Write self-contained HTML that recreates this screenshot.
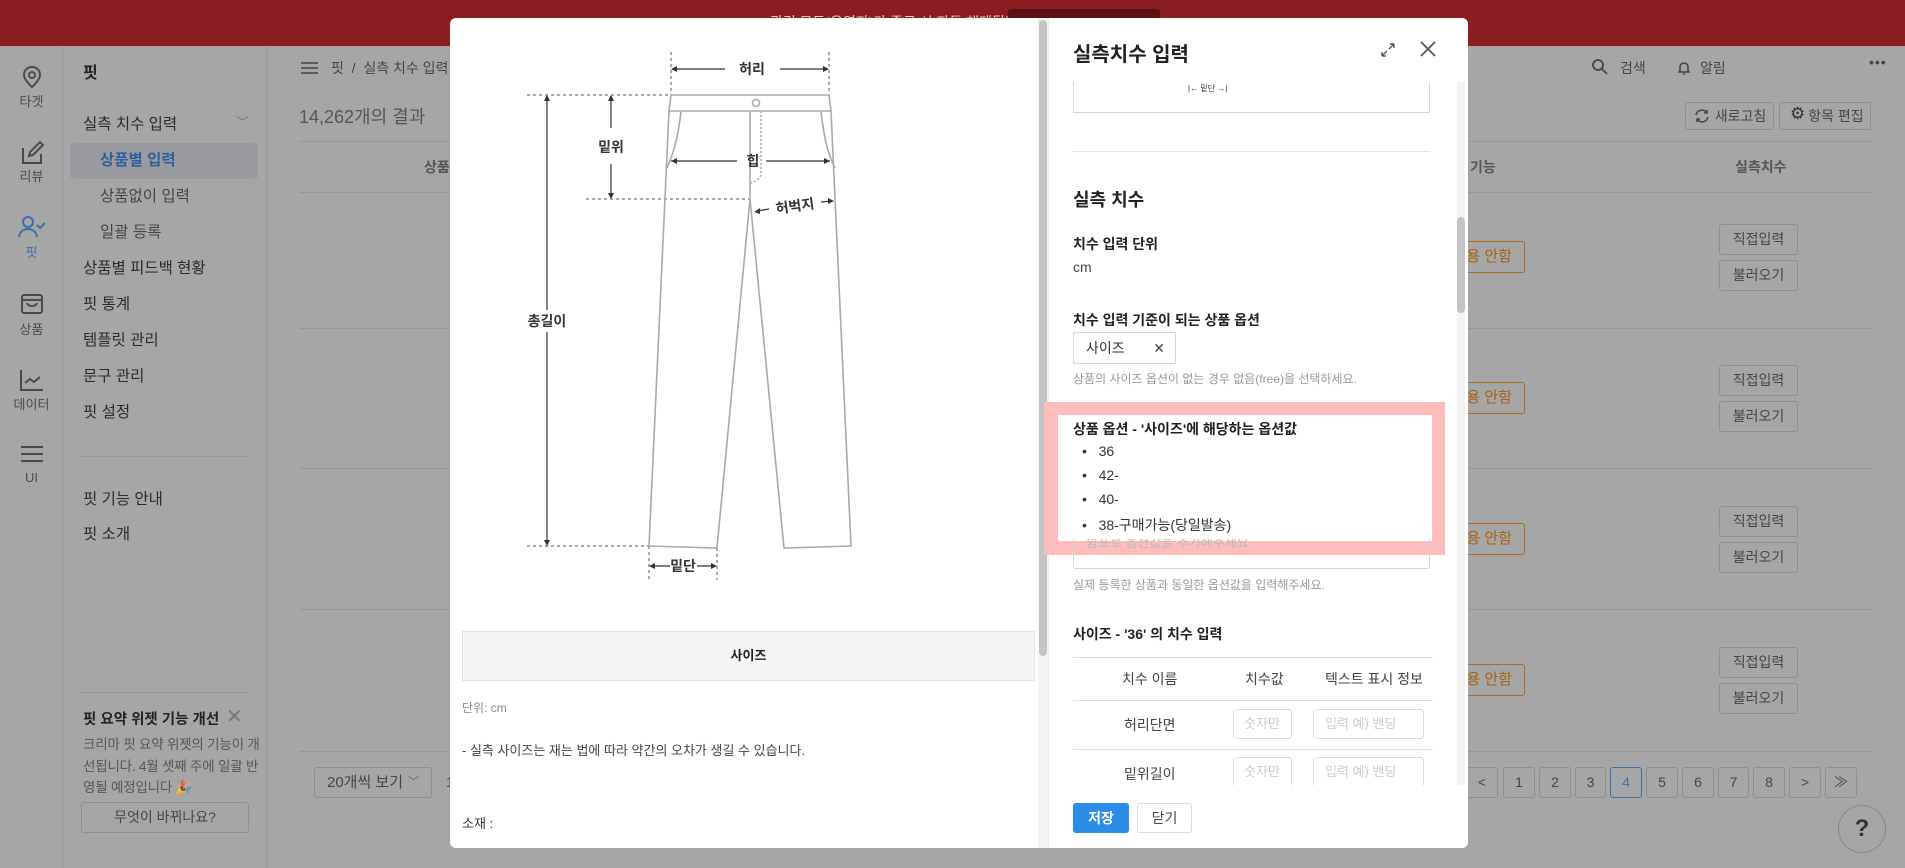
<!DOCTYPE html>
<html><head><meta charset="utf-8">
<style>
*{box-sizing:border-box;margin:0;padding:0}
body{width:1905px;height:868px;overflow:hidden;background:#a6a6a6;font-family:"Liberation Sans","Noto Sans CJK KR",sans-serif;color:#333;position:relative}
.a{position:absolute;white-space:nowrap}
.top{position:absolute;left:0;top:0;width:1905px;height:46px;background:#8b1c1f}
.rail{position:absolute;left:0;top:46px;width:63px;height:822px;border-right:1px solid #9a9a9a}
.side{position:absolute;left:63px;top:46px;width:204px;height:822px;border-right:1px solid #9a9a9a}
.rl{font-size:13px;color:#4a4a4a;width:63px;text-align:center;left:0}
.si{font-size:15.5px;color:#2a2a2a;left:83px}
.mbtn{position:absolute;border:1px solid #8e8e8e;border-radius:3px;font-size:14px;color:#444;text-align:center;background:#a6a6a6}
.ob{position:absolute;border:1px solid #b0681a;border-radius:3px;color:#a85f10;font-size:15px;left:1420px;width:105px;height:32px;line-height:30px;text-align:right;padding-right:12px}
.pg{position:absolute;top:767px;height:31px;border:1px solid #8e8e8e;border-radius:3px;font-size:14px;color:#444;text-align:center;line-height:29px}
.hl{position:absolute;height:1px;background:#969696}
.modal{position:absolute;left:450px;top:18px;width:1018px;height:830px;background:#fff;border-radius:6px;overflow:hidden}
.r{font-size:14px}
.inp{position:absolute;border:1px solid #d9d9d9;border-radius:3px;background:#fff}
</style></head><body>
<div class="top"></div>
<div class="a" style="left:770px;top:12px;font-size:14px;color:#e8c8c8">관리 모드(운영자)가 종료 시 자동 해제됩니다</div>
<div class="a" style="left:1008px;top:9px;width:152px;height:22px;background:#5a1214;border-radius:3px"></div>

<div class="rail">
<svg class="a" style="left:19px;top:18px" width="26" height="26" viewBox="0 0 26 26" fill="none" stroke="#4a4a4a" stroke-width="2"><path d="M13 3c-5 0-8 3.5-8 8 0 5 8 12 8 12s8-7 8-12c0-4.5-3-8-8-8z"/><circle cx="13" cy="11" r="3"/></svg>
<div class="a rl" style="top:45px">타겟</div>
<svg class="a" style="left:19px;top:94px" width="26" height="26" viewBox="0 0 26 26" fill="none" stroke="#4a4a4a" stroke-width="2"><path d="M4 8v15h18V14"/><path d="M10 16l1-4 10-10 3 3-10 10z"/></svg>
<div class="a rl" style="top:120px">리뷰</div>
<svg class="a" style="left:18px;top:169px" width="28" height="24" viewBox="0 0 28 24" fill="none" stroke="#3a6fb0" stroke-width="2"><circle cx="10" cy="7" r="5"/><path d="M1 22c1-6 5-8 9-8s8 2 9 8"/><path d="M19 10l3 3 5-5"/></svg>
<div class="a rl" style="top:196px;color:#3a6fb0">핏</div>
<svg class="a" style="left:19px;top:245px" width="26" height="26" viewBox="0 0 26 26" fill="none" stroke="#4a4a4a" stroke-width="2"><rect x="3" y="4" width="20" height="18" rx="2"/><path d="M3 9h20M8 12c1 4 9 4 10 0"/></svg>
<div class="a rl" style="top:273px">상품</div>
<svg class="a" style="left:19px;top:322px" width="26" height="24" viewBox="0 0 26 24" fill="none" stroke="#4a4a4a" stroke-width="2"><path d="M2 2v20h22"/><path d="M6 15l5-4 4 3 6-5"/></svg>
<div class="a rl" style="top:348px">데이터</div>
<svg class="a" style="left:19px;top:398px" width="26" height="20" viewBox="0 0 26 20" fill="none" stroke="#4a4a4a" stroke-width="2"><path d="M2 3h22M2 10h22M2 17h22"/></svg>
<div class="a rl" style="top:424px">UI</div>
</div>

<div class="side"></div>
<div class="a" style="left:83px;top:59px;font-size:16px;font-weight:bold;color:#222">핏</div>
<div class="a si" style="top:112px">실측 치수 입력</div>
<div class="a" style="left:236px;top:112px;font-size:13px;color:#777">﹀</div>
<div class="a" style="left:70px;top:143px;width:188px;height:36px;background:#999ba0;border-radius:3px"></div>
<div class="a si" style="left:100px;top:148px;color:#2f5f9e;font-weight:bold">상품별 입력</div>
<div class="a si" style="left:100px;top:184px;color:#444">상품없이 입력</div>
<div class="a si" style="left:100px;top:220px;color:#444">일괄 등록</div>
<div class="a si" style="top:256px">상품별 피드백 현황</div>
<div class="a si" style="top:292px">핏 통계</div>
<div class="a si" style="top:328px">템플릿 관리</div>
<div class="a si" style="top:364px">문구 관리</div>
<div class="a si" style="top:400px">핏 설정</div>
<div class="hl" style="left:80px;top:456px;width:168px"></div>
<div class="a si" style="top:487px">핏 기능 안내</div>
<div class="a si" style="top:522px">핏 소개</div>
<div class="hl" style="left:80px;top:692px;width:168px"></div>
<div class="a" style="left:83px;top:708px;font-size:14.5px;font-weight:bold;color:#222">핏 요약 위젯 기능 개선</div>
<div class="a" style="left:226px;top:704px;font-size:20px;color:#777">✕</div>
<div class="a" style="left:83px;top:734px;font-size:13.5px;color:#555;line-height:21.5px;white-space:normal;width:178px;word-break:break-all;letter-spacing:-0.2px">크리마 핏 요약 위젯의 기능이 개선됩니다. 4월 셋째 주에 일괄 반영될 예정입니다 🎉</div>
<div class="mbtn" style="left:81px;top:802px;width:168px;height:31px;line-height:29px">무엇이 바뀌나요?</div>

<svg class="a" style="left:300px;top:60px" width="20" height="16"><path d="M1 3h17M1 8h17M1 13h17" stroke="#444" stroke-width="1.6"/></svg>
<div class="a" style="left:331px;top:58px;font-size:14px;color:#444">핏 &nbsp;/ &nbsp;실측 치수 입력 &nbsp;/</div>
<div class="a" style="left:299px;top:103px;font-size:18px;color:#555">14,262개의 결과</div>
<div class="hl" style="left:299px;top:141px;width:1573px"></div>
<div class="hl" style="left:299px;top:192px;width:1573px"></div>
<div class="a" style="left:424px;top:157px;font-size:14px;color:#555;font-weight:bold">상품</div>
<div class="a" style="left:1470px;top:157px;font-size:14px;color:#555;font-weight:bold">기능</div>
<div class="a" style="left:1735px;top:157px;font-size:14px;color:#555;font-weight:bold">실측치수</div>
<div class="hl" style="left:299px;top:328px;width:1573px"></div>
<div class="hl" style="left:299px;top:468px;width:1573px"></div>
<div class="hl" style="left:299px;top:609px;width:1573px"></div>
<div class="hl" style="left:299px;top:751px;width:1573px"></div>

<svg class="a" style="left:1591px;top:58px" width="18" height="18" fill="none" stroke="#444" stroke-width="1.8"><circle cx="7" cy="7" r="5"/><path d="M11 11l5 5"/></svg>
<div class="a" style="left:1620px;top:58px;font-size:14px;color:#444">검색</div>
<svg class="a" style="left:1675px;top:58px" width="18" height="18" fill="none" stroke="#444" stroke-width="1.6"><path d="M3 14h12M5 14V9a4 4 0 018 0v5M8 16h2"/></svg>
<div class="a" style="left:1700px;top:58px;font-size:14px;color:#444">알림</div>
<div class="a" style="left:1869px;top:54px;font-size:14px;color:#444;letter-spacing:1px">•••</div>
<div class="mbtn" style="left:1685px;top:102px;width:89px;height:28px;line-height:26px;padding-left:22px">새로고침</div>
<svg class="a" style="left:1694px;top:108px" width="16" height="16" fill="none" stroke="#444" stroke-width="1.6"><path d="M2 7a6 6 0 0111-2M14 9a6 6 0 01-11 2M13 2v3h-3M3 14v-3h3"/></svg>
<div class="mbtn" style="left:1779px;top:102px;width:92px;height:28px;line-height:26px;padding-left:22px">항목 편집</div>
<div class="a" style="left:1790px;top:104px;font-size:17px;color:#333">⚙</div>

<div class="ob" style="top:241px">사용 안함</div>
<div class="ob" style="top:382px">사용 안함</div>
<div class="ob" style="top:523px">사용 안함</div>
<div class="ob" style="top:664px">사용 안함</div>
<div class="mbtn" style="left:1719px;top:224px;width:79px;height:31px;line-height:29px">직접입력</div>
<div class="mbtn" style="left:1719px;top:260px;width:79px;height:31px;line-height:29px">불러오기</div>
<div class="mbtn" style="left:1719px;top:365px;width:79px;height:31px;line-height:29px">직접입력</div>
<div class="mbtn" style="left:1719px;top:401px;width:79px;height:31px;line-height:29px">불러오기</div>
<div class="mbtn" style="left:1719px;top:506px;width:79px;height:31px;line-height:29px">직접입력</div>
<div class="mbtn" style="left:1719px;top:542px;width:79px;height:31px;line-height:29px">불러오기</div>
<div class="mbtn" style="left:1719px;top:647px;width:79px;height:31px;line-height:29px">직접입력</div>
<div class="mbtn" style="left:1719px;top:683px;width:79px;height:31px;line-height:29px">불러오기</div>

<div class="mbtn" style="left:314px;top:767px;width:118px;height:31px;line-height:29px;text-align:left;padding-left:12px;font-size:15px">20개씩 보기<span style="position:absolute;right:12px;font-size:11px;color:#666">﹀</span></div>
<div class="a" style="left:446px;top:774px;font-size:14px;color:#444">1</div>
<div class="pg" style="left:1466px;width:32px">&lt;</div>
<div class="pg" style="left:1503px;width:32px">1</div>
<div class="pg" style="left:1539px;width:32px">2</div>
<div class="pg" style="left:1575px;width:31px">3</div>
<div class="pg" style="left:1610px;width:32px;border-color:#3a6fb0;color:#3a6fb0">4</div>
<div class="pg" style="left:1646px;width:32px">5</div>
<div class="pg" style="left:1682px;width:32px">6</div>
<div class="pg" style="left:1718px;width:31px">7</div>
<div class="pg" style="left:1753px;width:32px">8</div>
<div class="pg" style="left:1789px;width:32px">&gt;</div>
<div class="pg" style="left:1825px;width:32px">≫</div>
<div class="a" style="left:1838px;top:805px;width:48px;height:48px;border:1px solid #888;border-radius:50%;text-align:center;line-height:46px;font-size:24px;color:#333;font-weight:bold">?</div>

<div class="modal">
 <div class="a" style="left:12px;top:613px;width:573px;height:50px;background:#f5f5f5;border:1px solid #e3e3e3;text-align:center;line-height:48px;font-size:13px;font-weight:bold;color:#222">사이즈</div>
 <div class="a" style="left:12px;top:681px;font-size:12px;color:#888">단위: cm</div>
 <div class="a" style="left:12px;top:722px;font-size:13px;color:#444">- 실측 사이즈는 재는 법에 따라 약간의 오차가 생길 수 있습니다.</div>
 <div class="a" style="left:12px;top:795px;font-size:13px;color:#333">소재 :</div>
 <div class="a" style="left:588px;top:0;width:10px;height:830px;background:#f3f3f3"></div>
 <div class="a" style="left:589px;top:2px;width:8px;height:636px;background:#c4c4c4;border-radius:4px"></div>
 <div class="a" style="left:598px;top:0;width:420px;height:830px;background:#fff;border-left:1px solid #eee"></div>
 <div class="a" style="left:623px;top:20px;font-size:20px;font-weight:bold;color:#222">실측치수 입력</div>
 <svg class="a" style="left:930px;top:24px" width="16" height="16" fill="none" stroke="#555" stroke-width="1.4"><path d="M2 14l5-5M2 14v-4M2 14h4M14 2l-5 5M14 2v4M14 2h-4"/></svg>
 <svg class="a" style="left:969px;top:22px" width="18" height="18" fill="none" stroke="#555" stroke-width="1.8"><path d="M2 2l14 14M16 2L2 16"/></svg>
 <div class="a" style="left:623px;top:64px;width:357px;height:31px;border:1px solid #d5d5d5;border-top:none"></div>
 <div class="a" style="left:738px;top:65px;font-size:8px;color:#333">|← 밑단 →|</div>
 <div class="a" style="left:623px;top:133px;width:357px;height:1px;background:#e5e5e5"></div>
 <div class="a" style="left:623px;top:168px;font-size:18px;font-weight:bold;color:#222">실측 치수</div>
 <div class="a" style="left:623px;top:216px;font-size:14px;font-weight:bold;color:#222">치수 입력 단위</div>
 <div class="a" style="left:623px;top:241px;font-size:14px;color:#444">cm</div>
 <div class="a" style="left:623px;top:292px;font-size:14px;font-weight:bold;color:#222">치수 입력 기준이 되는 상품 옵션</div>
 <div class="a" style="left:623px;top:314px;width:103px;height:32px;border:1px solid #d5d5d5;border-radius:2px;font-size:14px;color:#333;line-height:30px;padding-left:12px">사이즈<span style="position:absolute;right:10px;color:#444">✕</span></div>
 <div class="a" style="left:623px;top:352px;font-size:12px;color:#999">상품의 사이즈 옵션이 없는 경우 없음(free)을 선택하세요.</div>
 <div class="a" style="left:594px;top:384px;width:401px;height:153px;background:#ffbcbc"></div>
 <div class="a" style="left:608px;top:397px;width:374px;height:126px;background:#fff"></div>
 <div class="a" style="left:623px;top:401px;font-size:14px;font-weight:bold;color:#222">상품 옵션 - '사이즈'에 해당하는 옵션값</div>
 <div class="a r" style="left:632px;top:425px;color:#333">•&nbsp;&nbsp;&nbsp;36</div>
 <div class="a r" style="left:632px;top:449px;color:#333">•&nbsp;&nbsp;&nbsp;42-</div>
 <div class="a r" style="left:632px;top:473px;color:#333">•&nbsp;&nbsp;&nbsp;40-</div>
 <div class="a r" style="left:632px;top:497px;color:#333">•&nbsp;&nbsp;&nbsp;38-구매가능(당일발송)</div>
 <div class="a" style="left:623px;top:521px;width:357px;height:30px;border:1px solid #d5d5d5;border-top:none;border-radius:0 0 3px 3px;overflow:hidden"><div style="margin:-7px 0 0 12px;font-size:13px;color:#bbb">쉼표로 옵션값을 추가해주세요.</div></div>
 <div class="a" style="left:623px;top:558px;font-size:12px;color:#999">실제 등록한 상품과 동일한 옵션값을 입력해주세요.</div>
 <div class="a" style="left:623px;top:606px;font-size:14px;font-weight:bold;color:#222">사이즈 - '36' 의 치수 입력</div>
 <div class="a" style="left:623px;top:639px;width:360px;height:1px;background:#ddd"></div>
 <div class="a r" style="left:672px;top:651px;color:#444">치수 이름</div>
 <div class="a r" style="left:795px;top:651px;color:#444">치수값</div>
 <div class="a r" style="left:875px;top:651px;color:#444">텍스트 표시 정보</div>
 <div class="a" style="left:623px;top:682px;width:360px;height:1px;background:#ddd"></div>
 <div class="a r" style="left:674px;top:697px;color:#444">허리단면</div>
 <div class="inp" style="left:783px;top:691px;width:59px;height:30px;font-size:13px;color:#ccc;line-height:28px;padding-left:10px;overflow:hidden">숫자만</div>
 <div class="inp" style="left:863px;top:691px;width:111px;height:30px;font-size:13px;color:#ccc;line-height:28px;padding-left:11px">입력 예) 밴딩</div>
 <div class="a" style="left:623px;top:731px;width:360px;height:1px;background:#ddd"></div>
 <div class="a" style="left:598px;top:737px;width:392px;height:30px;overflow:hidden">
  <div class="a r" style="left:76px;top:9px;color:#444">밑위길이</div>
  <div class="inp" style="left:185px;top:2px;width:59px;height:30px;font-size:13px;color:#ccc;line-height:28px;padding-left:10px;overflow:hidden">숫자만</div>
  <div class="inp" style="left:265px;top:2px;width:111px;height:30px;font-size:13px;color:#ccc;line-height:28px;padding-left:11px">입력 예) 밴딩</div>
 </div>
 <div class="a" style="left:1007px;top:64px;width:8px;height:703px;background:#f3f3f3"></div>
 <div class="a" style="left:1007px;top:199px;width:8px;height:96px;background:#c4c4c4;border-radius:4px"></div>
 <div class="a" style="left:623px;top:785px;width:56px;height:30px;background:#2b8de8;border-radius:3px;color:#fff;font-size:14px;font-weight:bold;text-align:center;line-height:30px">저장</div>
 <div class="a" style="left:687px;top:785px;width:55px;height:30px;border:1px solid #ddd;border-radius:3px;color:#444;font-size:14px;text-align:center;line-height:28px">닫기</div>
</div>

<svg class="a" style="left:0;top:0" width="1905" height="868" fill="none">
 <g stroke="#555" stroke-width="1" stroke-dasharray="3,3">
  <path d="M671 52V95M829 52V95M527 95H671M586 199H750M527 546H649M649 546V580M717 548V580"/>
 </g>
 <g stroke="#aaa" stroke-width="1.6">
  <path d="M671 95H829L831 111H669Z"/>
  <path d="M669 111L649 546L717 548L750 199L784 548L851 546L831 111"/>
  <path d="M681 112C678 135 675 150 667 168M821 112C824 135 826 150 835 168"/>
  <path d="M750 111V199"/><path d="M761 111V175C758 180 755 182 750 183" stroke-dasharray="2,2"/>
  <circle cx="756" cy="103" r="3.5"/>
 </g>
 <g stroke="#333" stroke-width="1.2">
  <path d="M675 69H725M780 69H827M671 161H737M766 161H830M611 98V128M611 164V196M547 98V310M547 332V543M652 566H670M697 566H715M757 211L769 209M821 202L832 201"/>
 </g>
 <g fill="#333">
  <path d="M671 69l6-3v6zM829 69l-6-3v6zM671 161l6-3v6zM830 161l-6-3v6zM611 95l-3 6h6zM611 199l-3-6h6zM547 95l-3 6h6zM547 546l-3-6h6zM649 566l6-3v6zM717 566l-6-3v6zM754 212l6-4v6zM834 201l-6-3v6z"/>
 </g>
 <g font-family="Liberation Sans, Noto Sans CJK KR, sans-serif" font-weight="bold" font-size="14" fill="#333" text-anchor="middle">
  <text x="752" y="74">허리</text>
  <text x="611" y="152">밑위</text>
  <text x="753" y="166">힙</text>
  <text x="795" y="211" transform="rotate(-8 795 206)">허벅지</text>
  <text x="547" y="326">총길이</text>
  <text x="683" y="571">밑단</text>
 </g>
</svg>
</body></html>
